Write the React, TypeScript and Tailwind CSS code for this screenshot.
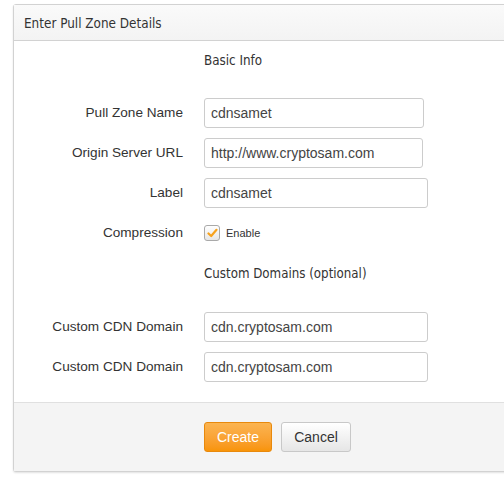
import React from 'react';

const label = "w-[190px] shrink-0 pr-[21px] text-right text-[13.6px] text-[#333]";
const input =
  "h-[30px] rounded-[3px] border border-[#ccc] bg-white px-[6px] text-[14px] text-[#444] outline-none";
const heading = { fontFamily: '"DejaVu Sans Condensed", "DejaVu Sans", sans-serif', fontStretch: 'condensed' as const };

function Row({ name, value, width }: { name: string; value: string; width: string }) {
  return (
    <div className="flex items-center">
      <div className={label}>{name}</div>
      <input readOnly value={value} className={`${input} ${width}`} />
    </div>
  );
}

export default function App() {
  return (
    <div
      className="h-[485px] w-[504px] overflow-hidden bg-white pt-[4px] pl-[13px]"
      style={{ fontFamily: '"Liberation Sans", Arial, sans-serif' }}
    >
      <div className="w-[520px] rounded-[3px] border border-[#d2d2d2] bg-white shadow-[0_1px_2px_rgba(0,0,0,0.12)]">
        {/* header */}
        <div
          className="flex h-[36px] items-center border-b border-[#d2d2d2] bg-gradient-to-b from-[#fafafa] to-[#f3f3f3] pt-[3px] pl-[10px] text-[13.4px] text-[#333]"
          style={heading}
        >
          Enter Pull Zone Details
        </div>

        {/* body */}
        <div className="pb-[20px]">
          <div className="flex h-[38px] items-center pt-[2px] pl-[190px] text-[13.3px] text-[#333]" style={heading}>
            Basic Info
          </div>
          <div className="mt-[19px] flex flex-col gap-[10px]">
            <Row name="Pull Zone Name" value="cdnsamet" width="w-[220px]" />
            <Row name="Origin Server URL" value="http://www.cryptosam.com" width="w-[219px]" />
            <Row name="Label" value="cdnsamet" width="w-[224px]" />
            <div className="flex h-[30px] items-center">
              <div className={label}>Compression</div>
              <div className="flex items-center">
                <span className="flex h-[16px] w-[16px] items-center justify-center rounded-[3px] border border-[#a9a9a9] bg-gradient-to-b from-white to-[#e6e6e6]">
                  <svg width="11" height="10" viewBox="0 0 11 10">
                    <path d="M1.5 5.5 L4.2 8 L9.5 1.8" fill="none" stroke="#f7a21d" strokeWidth="2.2" strokeLinecap="round" strokeLinejoin="round" />
                  </svg>
                </span>
                <span className="ml-[6px] text-[11px] text-[#333]">Enable</span>
              </div>
            </div>
          </div>
          <div className="mt-[10px] flex h-[30px] items-center pt-[2px] pl-[190px] text-[13.2px] text-[#333]" style={heading}>
            Custom Domains (optional)
          </div>
          <div className="mt-[24px] flex flex-col gap-[10px]">
            <Row name="Custom CDN Domain" value="cdn.cryptosam.com" width="w-[224px]" />
            <Row name="Custom CDN Domain" value="cdn.cryptosam.com" width="w-[224px]" />
          </div>
        </div>

        {/* footer */}
        <div className="flex h-[69px] items-center gap-[9px] border-t border-[#e0e0e0] bg-[#f4f4f4] pl-[190px]">
          <button className="h-[30px] w-[68px] rounded-[3px] border border-[#e8890c] bg-gradient-to-b from-[#fbb450] to-[#f89406] text-[14px] text-white">
            Create
          </button>
          <button className="h-[30px] w-[70px] rounded-[3px] border border-[#c8c8c8] bg-gradient-to-b from-white to-[#e6e6e6] text-[14px] text-[#333]">
            Cancel
          </button>
        </div>
      </div>
    </div>
  );
}
